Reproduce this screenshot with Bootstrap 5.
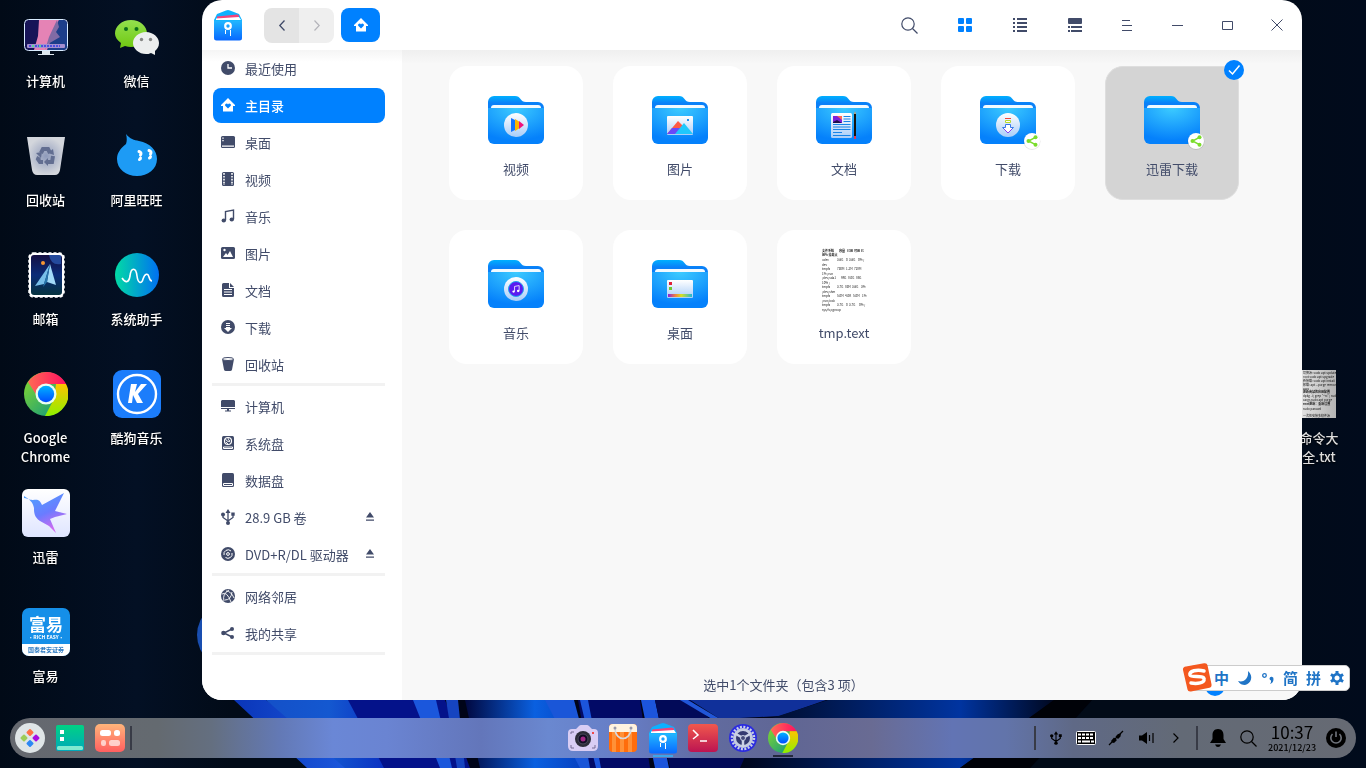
<!DOCTYPE html>
<html lang="zh-CN">
<head>
<meta charset="utf-8">
<meta name="viewport" content="width=device-width, initial-scale=1">
<title>文件管理器</title>
<link href="https://cdn.jsdelivr.net/npm/bootstrap@5.3.0/dist/css/bootstrap.min.css" rel="stylesheet">
<style>
  :root { --ink: #414b69; --accent: #0081ff; }
  body { font-family: "Noto Sans CJK SC", "Noto Sans", sans-serif; font-size: 13px; line-height: 19px; color: var(--ink); background: #010a1a; }
  a { color: inherit; text-decoration: none; }
  svg { display: block; flex-shrink: 0; overflow: visible; }
  .wallpaper { z-index: -1; }
  .desk { width: 202px; padding-top: 13px; }
  .desk-col { width: 91px; }
  .desk-item { height: 119px; color: #fff; font-weight: 500; }
  .desk-item:last-child { height: auto; }
  .desk-item span { margin-top: 10px; text-shadow: 0 1px 2px #000; }
  .desk-side { width: 64px; padding-top: 370px; }
  .desk-side .desk-item { width: 78px; margin-left: -22px; color: #ddd; }
  .win { min-width: 0; border-radius: 20px; background: #fff; overflow: hidden; z-index: 1; }
  .win-head { height: 50px; padding-left: 12px; }
  .nav-pair { width: 70px; height: 35px; border-radius: 8px; overflow: hidden; margin-left: 22px; margin-right: 7px; }
  .plain { border: 0; padding: 0; background: none; color: var(--ink); display: flex; align-items: center; justify-content: center; }
  .nav-pair .plain { background: #efefef; color: #b4b4ba; }
  .nav-pair .plain:first-child { background: #e4e4e4; color: var(--ink); }
  .home-btn { width: 39px; height: 34px; border-radius: 8px; background: var(--accent); color: #fff; }
  .view-btn { width: 55px; height: 50px; }
  .ctl-btn { width: 50px; height: 50px; }
  .side { width: 200px; padding: 1px 17px 0 11px; background: linear-gradient(#f5f5f5, #fff 12px); }
  .side a { height: 35px; padding: 0 11px 0 8px; gap: 10px; border-radius: 8px; margin-bottom: 2px; }
  .side a svg { margin-bottom: 2px; }
  .side a.active { background: var(--accent); color: #fff; }
  .side hr { height: 3px; border: 0; background: #f2f2f2; opacity: 1; margin: -1px 0 3px -1px; }
  .pane { min-width: 0; background: linear-gradient(#efefef, #f8f8f8 14px); }
  .files { display: grid; grid-template-columns: repeat(auto-fill, 134px); gap: 30px; padding: 16px 48px 0 47px; }
  .file { height: 134px; border-radius: 18px; background: #fff; padding-top: 30px; }
  .file.picked { background: #d4d4d4; border: 1px solid #dedede; padding-top: 29px; }
  .file span { margin-top: 15px; }
  .tick { right: -6px; top: -7px; }
  .file.text-file { padding-top: 17px; }
  .file.text-file span { margin-top: 11px; }
  .status { height: 32px; }
  .status-text { padding-right: 40px; }
  .status input { width: 87px; margin-right: 10px; appearance: none; background: none; height: 20px; }
  .status input::-webkit-slider-runnable-track { height: 4px; background: #ddd; border-radius: 2px; }
  .status input::-webkit-slider-thumb { appearance: none; width: 20px; height: 20px; margin-top: -6px; border-radius: 50%; background: var(--accent); }
  .status input::-moz-range-thumb { width: 20px; height: 20px; border: 0; background: var(--accent); }
  .ime { right: 16px; bottom: 77px; z-index: 3; height: 26px; width: 160px; background: #fff; border: 1px solid #ccc; border-radius: 5px; padding: 0 1px 0 19px; }
  .ime .plain { width: 23px; height: 24px; color: #1f74c6; font-size: 15px; font-weight: 700; line-height: 24px; }
  .ime-logo { left: -9px; top: -3px; }
  .dock { height: 40px; margin: 18px 10px 10px; border-radius: 20px; color: #000;
    background: linear-gradient(90deg, #65686f, #646a70 11%, #646f80 15%, #6379b5 20%, #6a87d6 24%, #6a84d2 28%, #6376ba 35%, #6a88d0 40%, #667cc4 46%, #616b9f 52%, #606694 58%, #696b93 64%, #6274b4 70%, #6274aa 74%, #5f6986 79%, #636a76 87%, #666a73); }
  .dock-side { flex: 1 1 0; padding: 0 5px; }
  .dock-bar { width: 2px; height: 24px; background: #383b46; margin: 0 5px; }
  .dock-icons { gap: 10px; }
  .dock .plain { color: #000; width: 30px; height: 40px; }
  .dock-run { bottom: 1px; left: 5px; width: 20px; height: 2px; }
  .run-files { background: #3aa6ec; }
  .run-chrome { background: #23283c; }
  .clock { width: 48px; margin: 0 5px; }
  .clock b { font-weight: 400; font-size: 17px; line-height: 20px; }
  .clock small { font-size: 9px; line-height: 12px; font-weight: 500; }
</style>
</head>
<body>
<svg width="0" height="0" class="position-absolute" aria-hidden="true">
  <defs>
    <radialGradient id="gFront" cx=".5" cy="0" r=".9"><stop stop-color="#3ccbff"/><stop offset="1" stop-color="#0581fb"/></radialGradient>
    <linearGradient id="gBack" x2="0" y2="1"><stop stop-color="#00b0ff"/><stop offset=".3" stop-color="#0a80f8"/></linearGradient>
    <linearGradient id="gDisc" x2="0" y2="1"><stop stop-color="#fff"/><stop offset="1" stop-color="#a9cdf8"/></linearGradient>
    <linearGradient id="gRed" x2="1" y2="0"><stop stop-color="#ff6a55"/><stop offset="1" stop-color="#ff1060"/></linearGradient>
    <linearGradient id="gGreen" x2="1" y2="1"><stop stop-color="#8edc28"/><stop offset="1" stop-color="#00908a"/></linearGradient>
    <linearGradient id="gYellow" x2="0" y2="1"><stop stop-color="#ffc400"/><stop offset="1" stop-color="#8ef000"/></linearGradient>
    <linearGradient id="gCore" x2="0" y2="1"><stop stop-color="#00b4ff"/><stop offset="1" stop-color="#004cff"/></linearGradient>
    <linearGradient id="gRain" x2="1" y2="0"><stop stop-color="#8a20e0"/><stop offset=".3" stop-color="#f08040"/><stop offset=".55" stop-color="#d8e020"/><stop offset="1" stop-color="#20b8d8"/></linearGradient>
    <linearGradient id="gPaper" x2="1" y2="0"><stop stop-color="#e2e2e2"/><stop offset="1" stop-color="#b4b4b4"/></linearGradient>
    <linearGradient id="gMgr" x2="0" y2="1"><stop stop-color="#22b8ff"/><stop offset="1" stop-color="#0868ff"/></linearGradient>
    <symbol id="folder" viewBox="0 0 56 48" overflow="visible">
      <path d="M0 14V6a6 6 0 0 1 6-6h21c3 0 4 1 5.500 3s2.500 3 5.500 3h12a6 6 0 0 1 6 6v12H0z" fill="url(#gBack)"/>
      <path d="M3 12c0-2 1-3 3-3h44c2 0 3 1 3 3v2H3z" fill="#f2faff"/>
      <path d="M0 12h56v30a6 6 0 0 1-6 6H6a6 6 0 0 1-6-6z" fill="url(#gFront)"/>
    </symbol>
    <symbol id="shared" viewBox="0 0 16 16" overflow="visible">
      <circle cx="8" cy="8.500" r="8.500" fill="#000" opacity=".1"/><circle cx="8" cy="8" r="8" fill="#fff"/>
      <path d="M11.500 4.300 4.500 8l7 3.700" fill="none" stroke="#7bdc2c" stroke-width="1.500"/><g fill="#7bdc2c"><circle cx="11.500" cy="4.300" r="2"/><circle cx="4.500" cy="8" r="2"/><circle cx="11.500" cy="11.700" r="2"/></g>
    </symbol>
    <symbol id="chrome" viewBox="0 0 44 44">
      <circle cx="22" cy="22" r="22" fill="url(#gGreen)"/>
      <path d="M4 10A22 22 0 0 1 42 12H22L13 24z" fill="url(#gRed)"/>
      <path d="M42 12A22 22 0 0 1 21 44l9-17 2-15z" fill="url(#gYellow)"/>
      <circle cx="22" cy="22" r="10.500" fill="#e9fff0"/><circle cx="22" cy="22" r="8.200" fill="url(#gCore)"/>
    </symbol>
    <symbol id="manager" viewBox="0 0 28 31">
      <path d="M0 10 3 4l9-3.500q2-.8 4 0L25 4l3 6v8H0z" fill="#0cb1ff"/>
      <path d="M3 6.500 23 4.500q2 0 2 2V9H3z" fill="#f0457c"/><path d="M2 8.500 25 7l2 3H2z" fill="#fff"/>
      <path d="M0 10.500h28V28a2.500 2.500 0 0 1-2.500 2.500h-23A2.500 2.500 0 0 1 0 28z" fill="url(#gMgr)"/>
      <circle cx="14" cy="16" r="2.800" fill="none" stroke="#fff" stroke-width="2.200"/><path d="M11.500 20v4M16.500 20v6" stroke="#fff"/>
    </symbol>
    <symbol id="home" viewBox="0 0 14 14"><path fill-rule="evenodd" d="M7 0 14 7v1h-2v5.500H2V8H0V7zM7 10.500 9.800 7.700a1.500 1.500 0 0 0-2.800-1.200 1.500 1.500 0 0 0-2.800 1.200z" fill="currentColor"/></symbol>
    <symbol id="usb" viewBox="0 0 14 16"><g fill="none" stroke="currentColor" stroke-width="1.300"><path d="M7 3v11M2 6v2.500L7 12M12 6v2.500L7 12"/></g><path d="M7 0 9.500 4h-5zM10.300 3.500h3.400v3.200h-3.400z" fill="currentColor"/><circle cx="2" cy="5.500" r="2" fill="currentColor"/><circle cx="7" cy="14" r="2" fill="currentColor"/></symbol>
    <symbol id="lens" viewBox="0 0 17 17"><circle cx="7" cy="7" r="6.200" fill="none" stroke="currentColor" stroke-width="1.200"/><path d="m11.500 11.500 5 5" stroke="currentColor" stroke-width="1.300"/></symbol>
    <symbol id="note" viewBox="0 0 14 14"><path d="M4.500 11V2.500L12.500 1v9" fill="none" stroke="currentColor" stroke-width="1.400"/><ellipse cx="2.800" cy="11.500" rx="2.200" ry="2" fill="currentColor"/><ellipse cx="10.800" cy="10.500" rx="2.200" ry="2" fill="currentColor"/></symbol>
    <symbol id="eject" viewBox="0 0 8 9"><path d="M4 0 8 5.500H0zM0 7.500h8v1.200H0z" fill="currentColor"/></symbol>
  </defs>
</svg>

<svg class="wallpaper position-fixed top-0 start-0 w-100 h-100" viewBox="0 0 1366 768" preserveAspectRatio="none" aria-hidden="true">
  <defs>
    <linearGradient id="wBase" x2="1" y2="0"><stop stop-color="#010a17"/><stop offset=".1" stop-color="#031024"/><stop offset=".17" stop-color="#020b18"/><stop offset=".9" stop-color="#020b18"/><stop offset="1" stop-color="#010b1c"/></linearGradient>
    <linearGradient id="wA" x2="1" y2="0"><stop stop-color="#0a35b8"/><stop offset="1" stop-color="#1e5ce0"/></linearGradient>
    <linearGradient id="wB" x2="1" y2="0"><stop stop-color="#1450c8"/><stop offset=".5" stop-color="#1458d0"/><stop offset="1" stop-color="#0a2cc0"/></linearGradient>
    <linearGradient id="wC" x2="1" y2="0"><stop stop-color="#010840"/><stop offset=".45" stop-color="#0a60e0"/><stop offset="1" stop-color="#0428a8"/></linearGradient>
    <linearGradient id="wD" x2="1" y2="0"><stop stop-color="#00061c"/><stop offset=".7" stop-color="#0034a0"/><stop offset="1" stop-color="#000820"/></linearGradient>
  </defs>
  <path d="M0 0h1366v768H0z" fill="url(#wBase)"/>
  <ellipse cx="240" cy="635" rx="43" ry="38" fill="#194eb0"/>
  <path d="M234 700 307 768H1030L1092 700z" fill="#000418"/>
  <path d="M234 700 307 768H360L266 700z" fill="url(#wA)"/>
  <path d="M266 700 345 768H392L350 700z" fill="url(#wB)"/>
  <path d="M348 700 384 768H470L445 700z" fill="#04128a"/>
  <path d="M413 700 440 768h12L436 700z" fill="#1b57dc"/>
  <path d="M446 700 457 768h8L458 700z" fill="#1644c0"/>
  <path d="M465 700 480 768H620L562 700z" fill="url(#wC)"/>
  <path d="M545 700 580 768h12L574 700z" fill="#1a56d8"/>
  <path d="M578 700 590 768h60L640 700z" fill="#020a66"/>
  <path d="M580 700 596 768h5L588 700zM641 700 655 768h14L655 700z" fill="#1c55dc"/>
  <path d="M655 700 670 768h90L690 700z" fill="#020a58"/>
  <path d="M690 700 720 719 780 716 826 700z" fill="#10309a"/>
  <path d="M688 700 720 719h-8L680 700z" fill="#2156d8"/>
  <path d="M828 700 760 722 740 768H960L1054 700z" fill="url(#wD)"/>
  <path d="M1054 700 960 768h70L1092 700z" fill="#000208"/>
</svg>

<div class="d-flex flex-column min-vh-100 position-relative">
  <div class="d-flex flex-grow-1">
    <nav class="desk d-flex flex-shrink-0 text-center" aria-label="桌面图标">
      <div class="desk-col">
        <a href="#" class="desk-item d-flex flex-column align-items-center">
          <svg width="48" height="48" viewBox="0 0 48 48"><rect x="2.500" y="6.500" width="43" height="31" rx="4" fill="#171458" stroke="#d9ecff"/><path d="M17 7h20l-4 12 3 8-8 10H12l4-14z" fill="#e583b5"/><path d="M37 7h4a4 4 0 0 1 4 4v22a4 4 0 0 1-4 4H25l3-8 6-7-2-5z" fill="#1c3e8a"/><path d="m35 7 2 7-3 5 4 5-12 7-3 6 4-13z" fill="#806ba5"/><rect x="5" y="31" width="38" height="4" rx="1" fill="#a58fd0"/><path d="M7 33h31" stroke="#4c50e0" stroke-width="2" stroke-dasharray="2 1"/><path d="M10 33h10" stroke="#55d894" stroke-width="2" stroke-dasharray="2 5"/><path d="M20 38h8v3h4v1H16v-1h4z" fill="#dfe8ef"/></svg>
          <span>计算机</span></a>
        <a href="#" class="desk-item d-flex flex-column align-items-center">
          <svg width="48" height="48" viewBox="0 0 48 48"><defs><radialGradient id="binG"><stop stop-color="#8f9bbb"/><stop offset="1" stop-color="#d3d6dc"/></radialGradient></defs><path d="M5 5h38l-5 33q-1 5-5 5H15q-4 0-5-5z" fill="url(#binG)"/><g fill="none" stroke="#626e91" stroke-width="4"><path d="m19 21 2-4h5l2 4M31 24l-1 6h-5M21 30h-3l-2-3 1-2"/></g><path d="m31 17 1 6-6-2zM26 26v8l-4-4zM14 21l6-1-1 6z" fill="#626e91"/></svg>
          <span>回收站</span></a>
        <a href="#" class="desk-item d-flex flex-column align-items-center">
          <svg width="48" height="48" viewBox="0 0 48 48"><defs><linearGradient id="mailG" x2="0" y2="1"><stop stop-color="#150e40"/><stop offset=".5" stop-color="#0a2c78"/><stop offset="1" stop-color="#06343c"/></linearGradient></defs><rect x="8" y="3" width="33" height="42" rx="4" fill="url(#mailG)"/><path d="M27 4h12v9q-10 2-12-9z" fill="#244a9c"/><rect x="8" y="3" width="33" height="42" rx="4" fill="none" stroke="#fff" stroke-width="2"/><rect x="7.500" y="2.500" width="34" height="43" rx="4" fill="none" stroke="#fff" stroke-width="2.500" stroke-dasharray="3 2"/><path d="M28 13 13 35l9-2z" fill="#78bfe9"/><path d="m28 13 6 21-9-3z" fill="#a3dbf8"/><path d="m28 13-7 23 4-5z" fill="#2877ad"/><circle cx="21" cy="12" r="2" fill="#f79533"/></svg>
          <span>邮箱</span></a>
        <a href="#" class="desk-item d-flex flex-column align-items-center">
          <svg width="48" height="48" viewBox="-2 -2 48 48"><use href="#chrome" width="44" height="44"/></svg>
          <span>Google<br>Chrome</span></a>
        <a href="#" class="desk-item d-flex flex-column align-items-center">
          <svg width="48" height="48" viewBox="0 0 48 48"><defs><linearGradient id="birdG" x2=".5" y2="1"><stop stop-color="#4aa8ff"/><stop offset=".6" stop-color="#6a7cff"/><stop offset="1" stop-color="#d26af0"/></linearGradient><linearGradient id="birdB" x2="0" y2="1"><stop stop-color="#fff"/><stop offset="1" stop-color="#dfe5ff"/></linearGradient></defs><rect width="48" height="48" rx="6" fill="url(#birdB)"/><path d="M2 9c5 1 7 2 9 2 5-1 7 0 9 5L42 4 33 22l12 3-12 3-5 2 6 14-7-7-9-5c-6-4-6-9-6-13-1-6-5-9-10-12z" fill="url(#birdG)"/></svg>
          <span>迅雷</span></a>
        <a href="#" class="desk-item d-flex flex-column align-items-center">
          <svg width="48" height="48" viewBox="0 0 48 48" text-anchor="middle"><rect width="48" height="48" rx="7" fill="#158fe8"/><path d="M0 36h48v5a7 7 0 0 1-7 7H7a7 7 0 0 1-7-7z" fill="#fff"/><text x="24" y="23" font-size="17" font-weight="700" fill="#fff">富易</text><text x="24" y="31" font-size="5" font-weight="700" fill="#fff">·RICH EASY·</text><text x="24" y="44" font-size="6" font-weight="700" fill="#2a78c0">国泰君安证券</text></svg>
          <span>富易</span></a>
      </div>
      <div class="desk-col">
        <a href="#" class="desk-item d-flex flex-column align-items-center">
          <svg width="48" height="48" viewBox="0 0 48 48"><defs><linearGradient id="wxG" x2="0" y2="1"><stop stop-color="#93e04e"/><stop offset="1" stop-color="#70c912"/></linearGradient></defs><path d="M18 7c9 0 16 6 16 13.500S27 34 18 34c-2 0-4-.3-6-1l-5 2 1-5C4 27 2 24 2 20.500 2 13 9 7 18 7z" fill="url(#wxG)"/><circle cx="13" cy="16" r="2" fill="#0d701a"/><circle cx="23.500" cy="16" r="2" fill="#0d701a"/><path d="M33 19c7 0 13 5 13 11 0 4-2 6-4 8v4l-4-2c-2 1-3 1-5 1-7 0-13-5-13-11s6-11 13-11z" fill="#eceeee"/><circle cx="28.500" cy="26.500" r="1.700" fill="#848684"/><circle cx="37.500" cy="26.500" r="1.700" fill="#848684"/></svg>
          <span>微信</span></a>
        <a href="#" class="desk-item d-flex flex-column align-items-center">
          <svg width="48" height="48" viewBox="0 0 48 48"><path d="M13 2c4 5 8 6 13 7 11 2 18 9 18 18 0 10-9 17-20 17S4 37 4 27c0-6 3-10 9-15 1-3 1-6 0-10z" fill="#1d9bf5"/><g fill="none" stroke="#fff" stroke-width="3" stroke-linecap="round"><path d="M26 19.500q3 1 1.500 3.500M27.500 26q0 1-1 1.500M36 18.500q3 1 1.500 3.500M37.500 24.500q0 1-1 1.500"/></g></svg>
          <span>阿里旺旺</span></a>
        <a href="#" class="desk-item d-flex flex-column align-items-center">
          <svg width="48" height="48" viewBox="0 0 48 48"><defs><linearGradient id="asG" x2="1" y2="0"><stop stop-color="#02dba5"/><stop offset="1" stop-color="#0070f2"/></linearGradient></defs><circle cx="24" cy="24" r="22" fill="url(#asG)"/><path d="M9 27c4 6 7 4 8-2 1-9 6-9 7 0 1 8 5 8 6 3 2-6 5-6 6-2q1 4 3 4" fill="none" stroke="#fff" stroke-width="1.600"/></svg>
          <span>系统助手</span></a>
        <a href="#" class="desk-item d-flex flex-column align-items-center">
          <svg width="48" height="48" viewBox="0 0 48 48"><rect width="48" height="48" rx="9" fill="#1c7dfb"/><circle cx="24" cy="24" r="19" fill="none" stroke="#fff" stroke-width="2.400"/><path d="M18 14h6l-2 8 6-8h6L25 24l5 9h-6l-4-8-1 8h-4z" fill="#fff"/></svg>
          <span>酷狗音乐</span></a>
      </div>
    </nav>

    <main class="win d-flex flex-column flex-grow-1 position-relative">
      <header class="win-head d-flex align-items-center">
        <svg width="28" height="31"><use href="#manager"/></svg>
        <div class="nav-pair d-flex">
          <button class="plain flex-fill" type="button" aria-label="后退"><svg width="6" height="11" viewBox="0 0 6 11"><path d="M5.500.5.800 5.500l4.700 5" fill="none" stroke="currentColor" stroke-width="1.300"/></svg></button>
          <button class="plain flex-fill" type="button" aria-label="前进"><svg width="6" height="11" viewBox="0 0 6 11"><path d="m.5.500 4.700 5-4.700 5" fill="none" stroke="currentColor" stroke-width="1.200"/></svg></button>
        </div>
        <button class="plain home-btn" type="button" aria-label="主目录"><svg width="14" height="14"><use href="#home"/></svg></button>
        <div class="d-flex ms-auto">
          <button class="plain view-btn" type="button" aria-label="搜索"><svg width="17" height="17"><use href="#lens"/></svg></button>
          <button class="plain view-btn" type="button" aria-label="图标视图"><svg width="14" height="14" viewBox="0 0 14 14" fill="#0081ff"><rect width="6" height="6" rx="1"/><rect x="8" width="6" height="6" rx="1"/><rect y="8" width="6" height="6" rx="1"/><rect x="8" y="8" width="6" height="6" rx="1"/></svg></button>
          <button class="plain view-btn" type="button" aria-label="列表视图"><svg width="14" height="14" viewBox="0 0 14 14" fill="currentColor"><path d="M0 0h2v2H0zM4 0h10v2H4zM0 4h2v2H0zM4 4h10v2H4zM0 8h2v2H0zM4 8h10v2H4zM0 12h2v2H0zM4 12h10v2H4z"/></svg></button>
          <button class="plain view-btn" type="button" aria-label="详情视图"><svg width="14" height="14" viewBox="0 0 14 14" fill="currentColor"><rect width="14" height="6" rx="1"/><path d="M0 8h2v2H0zM3 8h11v2H3zM0 12h2v2H0zM3 12h11v2H3z"/></svg></button>
          <button class="plain ctl-btn" type="button" aria-label="菜单"><svg width="10" height="11" viewBox="0 0 10 11"><path d="M0 .5h8M0 5.500h10M0 10.500h10" stroke="currentColor"/></svg></button>
          <button class="plain ctl-btn" type="button" aria-label="最小化"><svg width="11" height="1" viewBox="0 0 11 1"><path d="M0 .5h11" stroke="currentColor"/></svg></button>
          <button class="plain ctl-btn" type="button" aria-label="最大化"><svg width="11" height="9" viewBox="0 0 11 9"><path d="M.5.500h10v8H.5z" fill="none" stroke="currentColor"/></svg></button>
          <button class="plain ctl-btn" type="button" aria-label="关闭"><svg width="12" height="12" viewBox="0 0 12 12"><path d="m.5.500 11 11M11.500.5l-11 11" stroke="currentColor"/></svg></button>
        </div>
      </header>
      <div class="d-flex flex-grow-1">
        <nav class="side flex-shrink-0" aria-label="位置">
          <a href="#" class="d-flex align-items-center"><svg width="14" height="14" viewBox="0 0 14 14"><circle cx="7" cy="7" r="7" fill="currentColor"/><path d="M7 3v4h4" fill="none" stroke="#fff" stroke-width="1.300"/></svg>最近使用</a>
          <a href="#" class="active d-flex align-items-center fw-medium"><svg width="14" height="14"><use href="#home"/></svg>主目录</a>
          <a href="#" class="d-flex align-items-center"><svg width="14" height="12" viewBox="0 0 14 12"><rect width="14" height="12" rx="1.500" fill="currentColor"/><path d="M1 9.500h12v1.300H1zM1.300 1.500h1.400v1.300H1.300zM1.300 4h1.400v1.300H1.300z" fill="#fff"/></svg>桌面</a>
          <a href="#" class="d-flex align-items-center"><svg width="14" height="14" viewBox="0 0 14 14"><rect x="1" width="12" height="14" rx="1.500" fill="currentColor"/><path d="M3 1v12M11 1v12" stroke="#fff" stroke-width="1.600" stroke-dasharray="1.700 1.200"/></svg>视频</a>
          <a href="#" class="d-flex align-items-center"><svg width="14" height="14"><use href="#note"/></svg>音乐</a>
          <a href="#" class="d-flex align-items-center"><svg width="14" height="12" viewBox="0 0 14 12"><rect width="14" height="12" rx="1.500" fill="currentColor"/><circle cx="3.500" cy="3" r="1.200" fill="#fff"/><path d="m2 10 3-4 1.500 2L9 4l3 6z" fill="#fff"/></svg>图片</a>
          <a href="#" class="d-flex align-items-center"><svg width="14" height="14" viewBox="0 0 14 14"><path d="M2.500 0H8v5h5v7.500a1.500 1.500 0 0 1-1.500 1.500h-9A1.500 1.500 0 0 1 1 12.500v-11A1.500 1.500 0 0 1 2.500 0zM9 0l4 4H9z" fill="currentColor"/><path d="M3 6.500h8M3 9h8M3 11.500h8" stroke="#fff"/></svg>文档</a>
          <a href="#" class="d-flex align-items-center"><svg width="14" height="14" viewBox="0 0 14 14"><circle cx="7" cy="7" r="7" fill="currentColor"/><path d="M5 3h4v1H5zM5 5h4v1H5zM5 7h4v1h2l-4 4-4-4h2z" fill="#fff"/></svg>下载</a>
          <a href="#" class="d-flex align-items-center"><svg width="14" height="14" viewBox="0 0 14 14"><path d="M1 2h12l-2 10.500Q10.700 14 9 14H5q-1.700 0-2-1.500z" fill="currentColor"/><ellipse cx="7" cy="2" rx="5.500" ry="1.500" fill="#fff" stroke="currentColor"/></svg>回收站</a>
          <hr>
          <a href="#" class="d-flex align-items-center"><svg width="14" height="12" viewBox="0 0 14 12"><path d="M1 0h12l1 1v6H0V1zM0 8h14v1H8v1.500h2v1H4v-1h2V9H0z" fill="currentColor"/></svg>计算机</a>
          <a href="#" class="d-flex align-items-center"><svg width="14" height="14" viewBox="0 0 14 14"><rect x="1" width="12" height="14" rx="1.500" fill="currentColor"/><circle cx="7" cy="5" r="3.500" fill="none" stroke="#fff" stroke-width="1.200"/><path d="M4.500 3q1 3 4.500 2.500M7 2q0 2 2 3M5 6l2 2" fill="none" stroke="#fff" stroke-width=".9"/><path d="M2.500 11h9v1.500h-9z" fill="none" stroke="#fff"/></svg>系统盘</a>
          <a href="#" class="d-flex align-items-center"><svg width="14" height="14" viewBox="0 0 14 14"><rect x="1" width="12" height="14" rx="1.500" fill="currentColor"/><path d="M2.500 10.500v2h9v-2z" fill="none" stroke="#fff"/></svg>数据盘</a>
          <a href="#" class="d-flex align-items-center"><svg width="14" height="16"><use href="#usb"/></svg>28.9 GB 卷<svg class="ms-auto" width="8" height="9"><use href="#eject"/></svg></a>
          <a href="#" class="d-flex align-items-center text-nowrap"><svg width="14" height="14" viewBox="0 0 14 14"><circle cx="7" cy="7" r="7" fill="currentColor"/><circle cx="7" cy="7" r="1.400" fill="none" stroke="#fff"/><path d="M3 8a4.200 4.200 0 0 1 7-4M4.500 10.500A4.200 4.200 0 0 0 11 6" fill="none" stroke="#fff"/></svg>DVD+R/DL 驱动器<svg class="ms-auto" width="8" height="9"><use href="#eject"/></svg></a>
          <hr>
          <a href="#" class="d-flex align-items-center"><svg width="14" height="14" viewBox="0 0 14 14"><circle cx="7" cy="7" r="7" fill="currentColor"/><path d="M1 5q5-3 9 8M3 12Q1 5 8 1M5 2q5 0 8 7M4 11q6 0 7-8" fill="none" stroke="#fff" stroke-width=".9"/></svg>网络邻居</a>
          <a href="#" class="d-flex align-items-center"><svg width="14" height="12" viewBox="0 0 14 12"><path d="M11 2 3 6l8 4" fill="none" stroke="currentColor" stroke-width="1.500"/><g fill="currentColor"><circle cx="11" cy="2" r="2"/><circle cx="2.500" cy="6" r="2.300"/><circle cx="11" cy="10" r="2"/></g></svg>我的共享</a>
          <hr>
        </nav>
        <section class="pane d-flex flex-column flex-grow-1">
          <div class="files">
            <a href="#" class="file d-flex flex-column align-items-center"><svg width="56" height="48" viewBox="0 0 56 48"><use href="#folder" width="56" height="48"/><circle cx="28" cy="29" r="12" fill="url(#gDisc)"/><path d="M23 22v14l4-2V24z" fill="#1474ff"/><path d="M27 23v12l4-2.500v-7z" fill="#ffb400"/><path d="m31 25 5 4-5 4z" fill="#f0127c"/></svg><span>视频</span></a>
            <a href="#" class="file d-flex flex-column align-items-center"><svg width="56" height="48" viewBox="0 0 56 48"><use href="#folder" width="56" height="48"/><rect x="15" y="20" width="26" height="19" rx="1" fill="url(#gDisc)"/><path d="M15 38 26 25l5 5-6 8z" fill="#ff5a44"/><path d="m15 38 5-6h9l-5 6z" fill="#6a48f8"/><path d="m23 38 9-11 9 11z" fill="#20c8fc"/><path d="M35 23h2v2h-2z" fill="#1c90f0"/></svg><span>图片</span></a>
            <a href="#" class="file d-flex flex-column align-items-center"><svg width="56" height="48" viewBox="0 0 56 48"><use href="#folder" width="56" height="48"/><rect x="15" y="17" width="21" height="25" rx="1.500" fill="url(#gDisc)"/><path d="M17 20h9v7h-9z" fill="#8020d8"/><path d="M21 20h5v4z" fill="#ff6a50"/><path d="m17 26 4-2 5 3h-9z" fill="#20104c"/><path d="M27.500 20.500h7M27.500 23h7M27.500 25.500h7M17 28.500h17.500M17 31h17.500M17 33.500h17.500M17 36.500h9M17 39.500h17.500" stroke="#1884e8"/><path d="M39 18v22" stroke="#17120e" stroke-width="2"/><path d="m38 18 1-3 1 3z" fill="#c8a070"/><path d="M38 40h2v3h-2z" fill="#e03858"/></svg><span>文档</span></a>
            <a href="#" class="file d-flex flex-column align-items-center"><svg width="56" height="48" viewBox="0 0 56 48"><use href="#folder" width="56" height="48"/><circle cx="28" cy="29" r="12" fill="url(#gDisc)"/><path d="M25 22.500h6" stroke="#f04838"/><path d="M25.500 24.500h5v2h-5z" fill="#fff" stroke="#b5d82c"/><path d="M25.500 28.500h5v3h3L28 37l-5.500-5.500h3z" fill="#fff" stroke="#3878e8"/><path d="m24 33 4 4 4-4" fill="none" stroke="#8840f0"/><use href="#shared" x="44" y="37" width="16" height="16"/></svg><span>下载</span></a>
            <a href="#" class="file picked position-relative d-flex flex-column align-items-center"><svg width="56" height="48" viewBox="0 0 56 48"><use href="#folder" width="56" height="48"/><use href="#shared" x="44" y="37" width="16" height="16"/></svg><span>迅雷下载</span>
              <svg class="tick position-absolute" width="20" height="20" viewBox="0 0 20 20"><circle cx="10" cy="10" r="10" fill="#0081ff"/><path d="m5 10.500 3.500 3.500L15.500 5.500" fill="none" stroke="#fff" stroke-width="1.500"/></svg></a>
            <a href="#" class="file d-flex flex-column align-items-center"><svg width="56" height="48" viewBox="0 0 56 48"><use href="#folder" width="56" height="48"/><circle cx="28" cy="29" r="12" fill="url(#gDisc)"/><circle cx="28" cy="29" r="7.500" fill="#5b1cf0" stroke="#20a8f0"/><svg x="24" y="25" width="8" height="8" color="#fff"><use href="#note"/></svg></svg><span>音乐</span></a>
            <a href="#" class="file d-flex flex-column align-items-center"><svg width="56" height="48" viewBox="0 0 56 48"><use href="#folder" width="56" height="48"/><rect x="15" y="20" width="26" height="18" rx="1" fill="url(#gDisc)"/><path d="M17 22h3v3h-3z" fill="#e02038"/><path d="M17 27h3v3h-3z" fill="#70c830"/><path d="M16 34h24v3H16z" fill="url(#gRain)"/></svg><span>桌面</span></a>
            <a href="#" class="file text-file d-flex flex-column align-items-center">
              <svg width="48" height="65" viewBox="0 0 48 65" font-size="3" fill="#111">
                <g font-weight="700"><text x="2" y="5">文件系统</text><text x="19" y="5">容量</text><text x="27" y="5">已用</text><text x="34" y="5">可用 已</text><text x="2" y="9">用% 挂载点</text></g>
                <text x="2" y="14">udev</text><text x="17" y="14">3.6G</text><text x="26" y="14">0</text><text x="29" y="14">3.6G</text><text x="38" y="14">0% /</text><text x="2" y="19">dev</text>
                <text x="2" y="23">tmpfs</text><text x="17" y="23">730M</text><text x="26" y="23">1.2M</text><text x="34" y="23">728M</text><text x="2" y="28">1% /run</text>
                <text x="2" y="32">/dev/sda1</text><text x="21" y="32">98G</text><text x="28" y="32">8.0G</text><text x="36" y="32">85G</text><text x="2" y="37">10% /</text>
                <text x="2" y="41">tmpfs</text><text x="17" y="41">3.7G</text><text x="25" y="41">83M</text><text x="32" y="41">3.6G</text><text x="41" y="41">3%</text><text x="2" y="46">/dev/shm</text>
                <text x="2" y="50">tmpfs</text><text x="17" y="50">5.0M</text><text x="25" y="50">4.0K</text><text x="33" y="50">5.0M</text><text x="42" y="50">1%</text><text x="2" y="55">/run/lock</text>
                <text x="2" y="59">tmpfs</text><text x="17" y="59">3.7G</text><text x="26" y="59">0</text><text x="29" y="59">3.7G</text><text x="39" y="59">0% /</text><text x="2" y="64">sys/fs/cgroup</text>
              </svg><span>tmp.text</span></a>
          </div>
          <footer class="status d-flex align-items-center mt-auto">
            <div class="status-text flex-grow-1 text-center">选中1个文件夹（包含3 项）</div>
            <input type="range" min="0" max="100" value="0" aria-label="图标大小">
          </footer>
        </section>
      </div>
    </main>

    <aside class="desk-side flex-shrink-0 text-center">
      <a href="#" class="desk-item d-flex flex-column align-items-center">
        <svg width="34" height="48" viewBox="0 0 34 48" font-size="3" font-weight="400" fill="#111"><rect width="34" height="48" fill="url(#gPaper)"/><text x="1" y="4">切换源: sudo apt update</text><text x="1" y="8">root sudo apt upgrade</text><text x="1" y="12">新装载: sudo apt install</text><text x="1" y="16">卸载: apt --purge remove</text><text x="1" y="20">xxxx</text><text x="1" y="23" font-weight="700">更新商城的应用配置</text><text x="1" y="27">dpkg -l | grep "^rc" | sudo</text><text x="1" y="31">xargs sudo apt purge</text><text x="1" y="35" font-weight="700">root更新：重新设置</text><text x="1" y="40">sudo passwd</text><text x="1" y="47">一次性安装多软件源</text></svg>
        <span>命令大<br>全.txt</span></a>
    </aside>
  </div>

  <div class="ime position-absolute d-flex" role="toolbar" aria-label="输入法">
    <svg class="ime-logo position-absolute" width="30" height="30" viewBox="0 0 30 30"><path d="m4 3.500 18-3.200q3-.5 3.500 2l4 19q.5 3-2 3.500L9 28.500q-3 .5-3.500-2L1 7q-.5-3 3-3.500z" fill="#f4581f"/><path d="M22 8c-7-2-15 0-14 4 1 3 14 0 14 4 1 4-7 5-13 4" fill="none" stroke="#fff" stroke-width="3.500" stroke-linecap="round"/></svg>
    <button type="button" class="plain">中</button>
    <button type="button" class="plain" aria-label="全半角"><svg width="14" height="14" viewBox="0 0 14 14"><path d="M10 0c6 5 3 13-3 14-3 0-5-1-7-4 6 2 11-3 10-10z" fill="currentColor"/></svg></button>
    <button type="button" class="plain" aria-label="标点"><svg width="12" height="11" viewBox="0 0 12 11"><circle cx="2.500" cy="2.500" r="1.800" fill="none" stroke="currentColor" stroke-width="1.300"/><path d="M7.500 5.500a2 2 0 1 1 4 .5q0 4-3.500 5 1.500-2 1-3.500-1.500-.5-1.500-2z" fill="currentColor"/></svg></button>
    <button type="button" class="plain">简</button>
    <button type="button" class="plain">拼</button>
    <button type="button" class="plain" aria-label="设置"><svg width="14" height="14" viewBox="-7 -7 14 14"><circle r="3.800" fill="none" stroke="currentColor" stroke-width="2.600"/><path d="M0-7v3M0 4v3M-6.100-3.500l2.600 1.500M3.500 2l2.600 1.500M-6.100 3.500-3.500 2M3.500-2l2.600-1.500" stroke="currentColor" stroke-width="3"/></svg></button>
  </div>

  <footer class="dock d-flex align-items-center flex-shrink-0">
    <div class="dock-side d-flex align-items-center">
      <div class="dock-icons d-flex">
      <button class="plain" type="button" aria-label="启动器"><svg width="30" height="30" viewBox="0 0 30 30"><circle cx="15" cy="15" r="15" fill="#dfe5e7"/><g stroke-width="2" stroke-linejoin="round"><path d="m15 7 2.500 2.500L15 12l-2.500-2.500z" fill="#ff7044" stroke="#ff7044"/><path d="m9 12.500 2.500 2.500L9 17.500 6.500 15z" fill="#9dcc58" stroke="#9dcc58"/><path d="m21 12.500 2.500 2.500-2.500 2.500-2.500-2.500z" fill="#a80ce0" stroke="#a80ce0"/><path d="m15 18 2.500 2.500L15 23l-2.500-2.500z" fill="#2c88f4" stroke="#2c88f4"/></g></svg></button>
      <button class="plain" type="button" aria-label="显示桌面"><svg width="28" height="26" viewBox="0 0 28 26"><defs><linearGradient id="dkG" x2="0" y2="1"><stop stop-color="#00d284"/><stop offset="1" stop-color="#00a8ba"/></linearGradient></defs><rect width="28" height="26" rx="2" fill="url(#dkG)"/><path d="M4 5h4v4H4zM4 12h4v4H4z" fill="#fff"/><rect x="1" y="21" width="26" height="4" rx="1.500" fill="#80ead0"/></svg></button>
      <button class="plain" type="button" aria-label="多任务视图"><svg width="30" height="28" viewBox="0 0 30 28"><defs><linearGradient id="mtG" x2="0" y2="1"><stop stop-color="#ffb57a"/><stop offset="1" stop-color="#ff5f5f"/></linearGradient></defs><rect width="30" height="28" rx="5" fill="url(#mtG)"/><g fill="#fff"><rect x="5" y="6" width="11" height="6" rx="2.500"/><rect x="19" y="6" width="6" height="6" rx="2.500"/><g opacity=".65"><rect x="6" y="16" width="5" height="6" rx="2.200"/><rect x="14" y="16" width="11" height="6" rx="2.500"/></g></g></svg></button>
      </div>
      <div class="dock-bar"></div>
    </div>
    <div class="dock-icons d-flex">
      <button class="plain" type="button" aria-label="相机"><svg width="30" height="26" viewBox="0 0 30 26"><path d="M4 4h4l3-3q1-1 2-1h6q1 0 2 1l3 3h2q4 0 4 4v13q0 5-5 5H5q-5 0-5-5V8q0-4 4-4z" fill="#d9cdf4"/><path d="M3 9V7h3M3 20v3h3M27 20v3h-3" fill="none" stroke="#776d94"/><circle cx="15" cy="14" r="8" fill="#2c2c38"/><circle cx="15" cy="14" r="5" fill="#120c24" stroke="#4a4a5c"/><circle cx="15" cy="14" r="2.500" fill="#a02884"/><path d="M24 7h2v2h-2z" fill="#f04848"/></svg></button>
      <button class="plain" type="button" aria-label="应用商店"><svg width="28" height="28" viewBox="0 0 28 28"><rect width="28" height="28" rx="4" fill="#ff6d0c"/><path d="M5 8v20M13 8v20M21 8v20" stroke="#ff9138" stroke-width="4"/><path d="M0 8V4a4 4 0 0 1 4-4h20a4 4 0 0 1 4 4v4z" fill="#fff3e0"/><path d="M6 4c0 14 16 14 16 0" fill="none" stroke="#d8d8dc" stroke-width="1.600"/><circle cx="6" cy="4" r="1.500" fill="#99a"/><circle cx="22" cy="4" r="1.500" fill="#99a"/></svg></button>
      <button class="plain position-relative" type="button" aria-label="文件管理器"><svg width="28" height="31"><use href="#manager"/></svg><span class="dock-run run-files position-absolute"></span></button>
      <button class="plain" type="button" aria-label="终端"><svg width="30" height="28" viewBox="0 0 30 28"><defs><linearGradient id="tmG" x2="0" y2="1"><stop stop-color="#f0584c"/><stop offset="1" stop-color="#bc1452"/></linearGradient></defs><rect width="30" height="28" rx="4" fill="url(#tmG)"/><path d="m5 6 5 5-5 4M12 17h7" fill="none" stroke="#fff" stroke-width="1.500"/></svg></button>
      <button class="plain" type="button" aria-label="控制中心"><svg width="28" height="28" viewBox="-14 -14 28 28"><circle r="14" fill="#2b2be0"/><circle r="11" fill="none" stroke="#c8d0e8" stroke-width="2.500" stroke-dasharray="2 1.456"/><circle r="8.500" fill="#343a70" stroke="#c5cce0" stroke-width="3"/><path d="M0 0v9M0 0l-8-4.500M0 0l8-4.500" stroke="#ccd2e6" stroke-width="2.500"/><circle r="2.500" fill="#444a78" stroke="#ccd2e6"/></svg></button>
      <button class="plain position-relative" type="button" aria-label="Chrome"><svg width="30" height="30"><use href="#chrome"/></svg><span class="dock-run run-chrome position-absolute"></span></button>
    </div>
    <div class="dock-side d-flex align-items-center justify-content-end">
      <div class="dock-bar"></div>
      <button class="plain" type="button" aria-label="USB"><svg width="12" height="16"><use href="#usb"/></svg></button>
      <button class="plain" type="button" aria-label="键盘"><svg width="20" height="14" viewBox="0 0 20 14"><rect x=".5" y=".5" width="19" height="13" rx="1" stroke="#fff"/><path d="M2 3.500h16M2 7h16" stroke="#fff" stroke-width="2.200" stroke-dasharray="3 1"/><path d="M2 10.500h3M6 10.500h8M15 10.500h3" stroke="#fff" stroke-width="2"/></svg></button>
      <button class="plain" type="button" aria-label="网络"><svg width="14" height="14" viewBox="0 0 14 14"><path d="M0 14 14 0" stroke="currentColor" stroke-width="1.200"/><path d="m2 10 3-3.500L8 9l-3 3q-2 0-3-2zM6.500 5.500 9 3l3-.5-.5 3L9 8z" fill="currentColor"/></svg></button>
      <button class="plain" type="button" aria-label="音量"><svg width="15" height="12" viewBox="0 0 15 12"><path d="M0 3.500h3L8 0v12L3 8.500H0z" fill="currentColor"/><path d="M10.500 3v6M14 1v10" stroke="currentColor" stroke-width="1.200"/></svg></button>
      <button class="plain" type="button" aria-label="展开"><svg width="6" height="10" viewBox="0 0 6 10"><path d="m.5.500 4.500 4.500-4.500 4.500" fill="none" stroke="currentColor" stroke-width="1.200"/></svg></button>
      <div class="dock-bar"></div>
      <button class="plain" type="button" aria-label="通知"><svg width="16" height="18" viewBox="0 0 16 18"><path d="M8 0c4 0 5.500 3 5.500 6v4L16 14H0l2.500-4V6c0-3 1.500-6 5.500-6zM5 15.500h6q-1 2.500-3 2.500t-3-2.500z" fill="currentColor"/></svg></button>
      <button class="plain" type="button" aria-label="搜索"><svg width="17" height="17"><use href="#lens"/></svg></button>
      <div class="clock d-flex flex-column text-center"><b>10:37</b><small>2021/12/23</small></div>
      <button class="plain" type="button" aria-label="电源"><svg width="20" height="20" viewBox="0 0 20 20"><circle cx="10" cy="10" r="10" fill="currentColor"/><path d="M6.500 6a5.200 5.200 0 1 0 7 0M10 3.500V9" fill="none" stroke="#70747c" stroke-width="1.600"/></svg></button>
    </div>
  </footer>
</div>
<script src="https://cdn.jsdelivr.net/npm/bootstrap@5.3.0/dist/js/bootstrap.bundle.min.js"></script>
</body>
</html>
